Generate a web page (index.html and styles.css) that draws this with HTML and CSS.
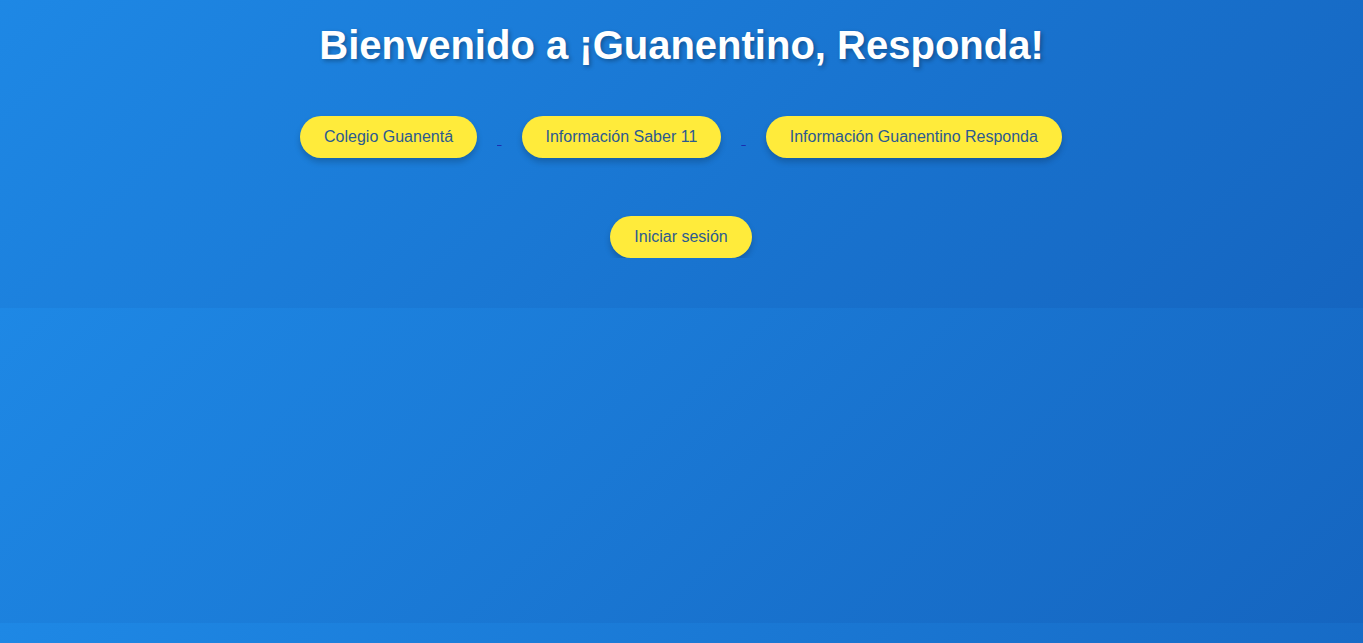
FILE: index.html
```html
<!DOCTYPE html>
<html lang="es" class="page">
<head>
<meta charset="utf-8">
<title>Guanentino, Responda</title>
<link rel="stylesheet" href="styles.css">
</head>
<body class="page-body">
  <main class="hero">
    <h1 class="hero-title">Bienvenido a ¡Guanentino, Responda!</h1>
    <nav class="hero-nav">
      <button class="pill">Colegio Guanentá</button>
      <a class="sep" href="#">&nbsp;</a>
      <button class="pill">Información Saber 11</button>
      <a class="sep" href="#">&nbsp;</a>
      <button class="pill">Información Guanentino Responda</button>
    </nav>
    <div class="login-row">
      <button class="pill">Iniciar sesión</button>
    </div>
  </main>
</body>
</html>
```

FILE: styles.css
```css
.page {
  background: linear-gradient(135deg, #1e88e5 0%, #1565c0 100%);
  background-size: 100% 315px;
  background-position: 0 -7px;
  background-repeat: repeat;
  min-height: 100%;
}

.page-body {
  margin: 0;
  font-family: "Liberation Sans", Arial, sans-serif;
  color: #ffffff;
}

.hero {
  display: flex;
  flex-direction: column;
  align-items: center;
  padding-top: 22px;
}

.hero-title {
  margin: 0;
  font-size: 40px;
  font-weight: bold;
  line-height: 46px;
  color: #ffffff;
  text-shadow: 2px 2px 4px rgba(0, 0, 0, 0.3);
  text-align: center;
}

.hero-nav {
  display: flex;
  align-items: center;
  gap: 20px;
  margin-top: 48px;
  margin-right: 1px;
}

.sep {
  font-size: 16px;
  color: #1a2fb0;
  text-decoration: underline;
  text-decoration-thickness: 1px;
  line-height: 18px;
  padding-top: 3px;
}

.login-row {
  display: flex;
  justify-content: center;
  margin-top: 58px;
  margin-right: 1px;
}

.pill {
  font-family: "Liberation Sans", Arial, sans-serif;
  font-size: 16px;
  line-height: 18px;
  padding: 12px 24px;
  border: none;
  border-radius: 21px;
  background: #ffeb3b;
  color: #2c5a90;
  box-shadow: 0 4px 6px rgba(0, 0, 0, 0.2);
  cursor: pointer;
  white-space: nowrap;
}
```
